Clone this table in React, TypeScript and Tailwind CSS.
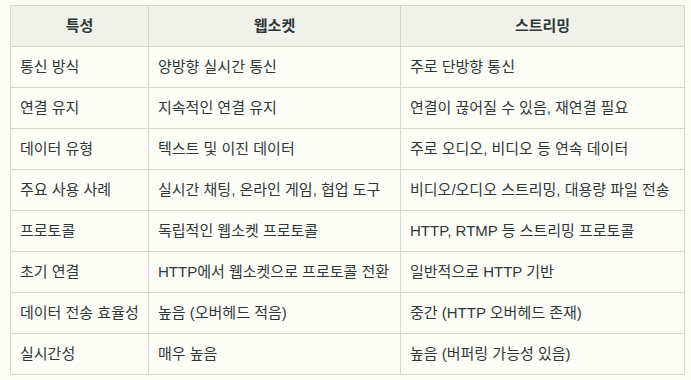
const rows: [string, string, string][] = [
  ["통신 방식", "양방향 실시간 통신", "주로 단방향 통신"],
  ["연결 유지", "지속적인 연결 유지", "연결이 끊어질 수 있음, 재연결 필요"],
  ["데이터 유형", "텍스트 및 이진 데이터", "주로 오디오, 비디오 등 연속 데이터"],
  ["주요 사용 사례", "실시간 채팅, 온라인 게임, 협업 도구", "비디오/오디오 스트리밍, 대용량 파일 전송"],
  ["프로토콜", "독립적인 웹소켓 프로토콜", "HTTP, RTMP 등 스트리밍 프로토콜"],
  ["초기 연결", "HTTP에서 웹소켓으로 프로토콜 전환", "일반적으로 HTTP 기반"],
  ["데이터 전송 효율성", "높음 (오버헤드 적음)", "중간 (HTTP 오버헤드 존재)"],
  ["실시간성", "매우 높음", "높음 (버퍼링 가능성 있음)"],
]

export default function App() {
  return (
    <div
      className="w-[691px] h-[380px] bg-[#fdfdf8] pt-[5px] pl-[10px] text-[15px] text-[#2f3838]"
      style={{ fontFamily: '"Liberation Sans", "Noto Sans CJK KR", sans-serif' }}
    >
      <table className="w-[674px] border-collapse border border-[#d6d6d0] table-fixed">
        <colgroup>
          <col className="w-[138px]" />
          <col className="w-[252px]" />
          <col className="w-[284px]" />
        </colgroup>
        <thead>
          <tr className="h-[41px] bg-[#f1f1ec]">
            <th className="border border-[#d6d6d0] font-bold text-center">특성</th>
            <th className="border border-[#d6d6d0] font-bold text-center">웹소켓</th>
            <th className="border border-[#d6d6d0] font-bold text-center">스트리밍</th>
          </tr>
        </thead>
        <tbody>
          {rows.map((r) => (
            <tr key={r[0]} className="h-[41px]">
              {r.map((c, i) => (
                <td key={i} className="border border-[#d6d6d0] px-[9px] whitespace-nowrap">
                  {c}
                </td>
              ))}
            </tr>
          ))}
        </tbody>
      </table>
    </div>
  )
}
